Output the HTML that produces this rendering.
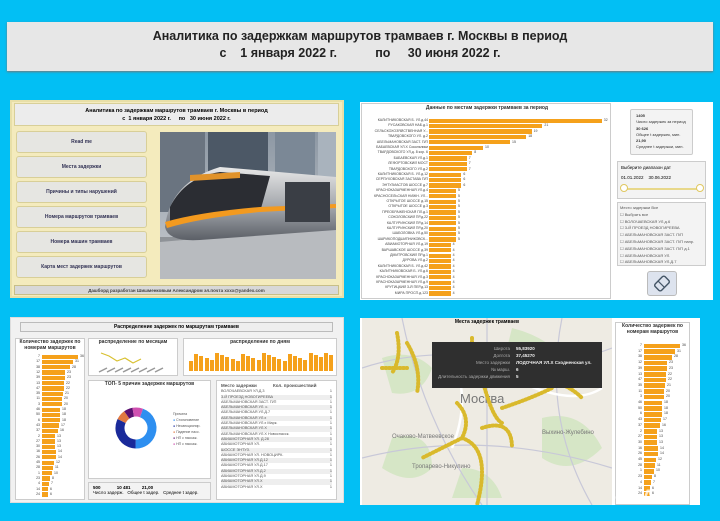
<!DOCTYPE html>
<html><head><meta charset="utf-8"><style>
*{margin:0;padding:0;box-sizing:border-box}
body{width:720px;height:521px;background:#02bff4;position:relative;overflow:hidden;font-family:"Liberation Sans","Noto Sans CJK SC",sans-serif}
.a{position:absolute}
.hdr{left:7px;top:22px;width:706px;height:49px;background:#e7e7e7;box-shadow:0 1px 2px #777;text-align:center;font-weight:bold;font-size:12.5px;color:#222;line-height:17px;padding-top:6px}
.p1{left:10px;top:100px;width:334px;height:198px;background:#f4ebbd;border:2px solid #e8dfa8}
.btn{position:absolute;left:4px;width:131px;height:22px;background:#e6e6e2;border:1px solid #d8cf98;border-radius:3px;font-size:5px;font-weight:bold;color:#335;text-align:center;line-height:21px}
.w{background:#fff}
.box{position:absolute;background:#fff;border:1px solid #ccc;overflow:hidden}
.t{font-size:5px;color:#333}
</style></head><body>
<div class="a hdr">Аналитика по задержкам маршрутов трамваев г. Москвы в период<br><span>с &nbsp;&nbsp;&nbsp;1 января 2022 г. &nbsp;&nbsp;&nbsp;&nbsp;&nbsp;&nbsp;&nbsp;&nbsp;&nbsp;&nbsp;по &nbsp;&nbsp;&nbsp;&nbsp;30 июня 2022 г.</span></div>

<div class="a p1">
 <div class="a" style="left:2px;top:1px;width:325px;height:23px;background:#ececec;border:1px solid #d8cf98;text-align:center;font-size:5.5px;font-weight:bold;line-height:8px;padding-top:3px">Аналитика по задержкам маршрутов трамваев г. Москвы в период<br>с &nbsp;1 января 2022 г. &nbsp;&nbsp;&nbsp;&nbsp;по &nbsp;&nbsp;30 июня 2022 г.</div>
 <div class="btn" style="top:29px">Read me</div>
 <div class="btn" style="top:54px">Места задержки</div>
 <div class="btn" style="top:79px">Причины и типы нарушений</div>
 <div class="btn" style="top:104px">Номера маршрутов трамваев</div>
 <div class="btn" style="top:129px">Номера машин трамваев</div>
 <div class="btn" style="top:154px">Карта мест задержек маршрутов</div>
 <svg class="a" style="left:148px;top:30px" width="176" height="147" viewBox="0 0 176 147">
  <defs><linearGradient id="sk" x1="0" y1="0" x2="0" y2="1"><stop offset="0" stop-color="#8d98a4"/><stop offset="1" stop-color="#c9ccd0"/></linearGradient>
  <linearGradient id="tr" x1="0" y1="0" x2="0" y2="1"><stop offset="0" stop-color="#e8e8e8"/><stop offset=".6" stop-color="#9a9ea4"/><stop offset="1" stop-color="#5b5f66"/></linearGradient></defs>
  <rect width="176" height="147" fill="url(#sk)"/>
  <rect x="0" y="0" width="45" height="80" fill="#6a7480"/><rect x="48" y="0" width="60" height="50" fill="#4c5866"/><rect x="115" y="0" width="40" height="60" fill="#7b8896"/><rect x="158" y="0" width="18" height="70" fill="#a9b3bd"/>
  <rect y="105" width="176" height="42" fill="#8f9398"/>
  <path d="M0 110 L176 95 L176 147 L0 147Z" fill="#b8bbbf"/>
  <path d="M5 95 Q10 50 60 35 L176 45 L176 98 L40 108 Q8 110 5 95Z" fill="url(#tr)"/>
  <path d="M10 75 Q25 45 60 40 L110 44 L100 80 Q60 78 10 90Z" fill="#2b2d33"/>
  <path d="M5 90 Q40 80 100 75 L176 72 L176 76 L100 80 Q40 86 7 96Z" fill="#f39a1f"/>
  <path d="M30 43 L80 40 L80 46 L30 49Z" fill="#e0922a"/>
  <rect x="125" y="50" width="45" height="40" fill="#3a3e45"/>
 </svg>
 <div class="a" style="left:2px;top:183px;width:325px;height:10px;background:#d8d8d8;border:1px solid #c8bf88;font-size:4.5px;text-align:center;line-height:9px;font-weight:bold;color:#444">Дашборд разработан Шишменковым Александром эл.почта xxxx@yandex.com</div>
</div>

<div class="a w" style="left:360px;top:102px;width:353px;height:198px"></div>
<div class="a" style="left:361px;top:103px;width:250px;height:196px;border:1px solid #ccc;background:#fff">
 <div class="a t" style="left:0;width:250px;top:1px;text-align:center;font-weight:bold">Данные по местам задержки трамваев за период</div>
 <div id="b1"></div>
</div>
<div class="box" style="left:630px;top:109px;width:63px;height:46px;background:#f3f3f3;border-radius:2px;font-size:4px;color:#333;padding:3px 5px;line-height:6.3px;white-space:nowrap"><b>1405</b><br>Число задержек за период<br><b>30 626</b><br>Общее t задержек, мин.<br><b>21,90</b><br>Среднее t задержки, мин.</div>
<div class="box" style="left:617px;top:161px;width:89px;height:38px;background:#f3f3f3;font-size:4.5px;padding:3px">Выберите диапазон дат<br><br>01.01.2022 &nbsp;&nbsp; 30.06.2022
 <div class="a" style="left:5px;top:26px;width:78px;height:2px;background:#e8d88a"></div>
 <div class="a" style="left:2px;top:22px;width:8px;height:8px;border-radius:50%;border:1px solid #e0c860;background:#fff"></div>
 <div class="a" style="left:78px;top:22px;width:8px;height:8px;border-radius:50%;border:1px solid #e0c860;background:#fff"></div></div>
<div class="box" style="left:617px;top:202px;width:89px;height:64px;background:#f3f3f3;font-size:4px;padding:2px;line-height:6.8px;color:#555;white-space:nowrap">Место задержки Все<br>☐ Выбрать все<br>☐ ВОЛОЧАЕВСКАЯ УЛ.д.6<br>☐ 3-Й ПРОЕЗД НОВОГИРЕЕВА<br>☐ АБЕЛЬМАНОВСКАЯ ЗАСТ. П/П<br>☐ АБЕЛЬМАНОВСКАЯ ЗАСТ. П/П напр.<br>☐ АБЕЛЬМАНОВСКАЯ ЗАСТ. П/П д.1<br>☐ АБЕЛЬМАНОВСКАЯ УЛ.<br>☐ АБЕЛЬМАНОВСКАЯ УЛ.Д.7</div>
<div class="a" style="left:647px;top:271px;width:30px;height:25px;background:#dde3ee;border:1px solid #bbb;border-radius:3px"><svg width="28" height="23"><g transform="rotate(-45 14 11.5)"><rect x="7" y="7" width="14" height="9" rx="2" fill="none" stroke="#456" stroke-width="1.4"/><path d="M13 7 V16" stroke="#456" stroke-width="1.2"/></g></svg></div>

<div class="a" style="left:10px;top:317px;width:334px;height:186px;background:#f1f1f1;border:1px solid #ddd"></div>
<div class="a" style="left:20px;top:322px;width:313px;height:10px;background:#eee;border:1px solid #bbb;font-size:5px;font-weight:bold;text-align:center;line-height:9px">Распределение задержек по маршрутам трамваев</div>
<div class="box" style="left:15px;top:338px;width:70px;height:162px"><div class="t" style="text-align:center;font-weight:bold;font-size:5px;line-height:6px">Количество задержек по номерам маршрутов</div><div id="b3"></div></div>
<div class="box" style="left:88px;top:338px;width:90px;height:38px"><div class="t" style="text-align:center;font-weight:bold">распределение по месяцам</div>
 <svg class="a" style="left:8px;top:8px" width="80" height="28"><polyline points="4,6 12,9 20,14 28,11 36,16 44,12" fill="none" stroke="#d8c030" stroke-width="1.2"/><g stroke="#999" stroke-width="1.5"><path d="M2 25l8-4M10 25l8-4M18 25l8-4M26 25l8-4M34 25l8-4M42 25l8-4M50 25l8-4M58 25l8-4"/></g></svg></div>
<div class="box" style="left:183px;top:338px;width:154px;height:38px"><div class="t" style="text-align:center;font-weight:bold">распределение по дням</div><div id="b4"></div></div>
<div class="box" style="left:88px;top:380px;width:123px;height:99px"><div class="t" style="text-align:center;font-weight:bold">ТОП- 5 причин задержек маршрутов</div>
 <svg class="a" style="left:22px;top:22px" width="50" height="50" viewBox="-25 -25 50 50"><g fill="none" stroke-width="9">
 <circle r="16" stroke="#2e8ff0" stroke-dasharray="45 100.5" transform="rotate(-70)"/>
 <circle r="16" stroke="#1a2a9a" stroke-dasharray="32 100.5" stroke-dashoffset="-45" transform="rotate(-70)"/>
 <circle r="16" stroke="#e07840" stroke-dasharray="8 100.5" stroke-dashoffset="-77" transform="rotate(-70)"/>
 <circle r="16" stroke="#5a1070" stroke-dasharray="7 100.5" stroke-dashoffset="-85" transform="rotate(-70)"/>
 <circle r="16" stroke="#d050b0" stroke-dasharray="8.5 100.5" stroke-dashoffset="-92" transform="rotate(-70)"/></g></svg>
 <div class="a" style="left:84px;top:30px;font-size:3.5px;line-height:6px;color:#555">Причина<br><span style="color:#2e8ff0">●</span> Столкновение<br><span style="color:#1a2a9a">●</span> Несанкционир.<br><span style="color:#e07840">●</span> Падение пасс.<br><span style="color:#5a1070">●</span> НП с пассаж.<br><span style="color:#d050b0">●</span> НП с пассаж.</div></div>
<div class="box" style="left:88px;top:482px;width:123px;height:18px;background:#f3f3f3;font-size:4.5px;padding:2px 4px;white-space:nowrap"><b>500</b> &nbsp;&nbsp;&nbsp;&nbsp;&nbsp;&nbsp;&nbsp;&nbsp;&nbsp;&nbsp;&nbsp;&nbsp;<b>10 481</b> &nbsp;&nbsp;&nbsp;&nbsp;&nbsp;&nbsp;&nbsp;&nbsp;<b>21,00</b><br>Число задерж. &nbsp;&nbsp;Общее t задер. &nbsp;&nbsp;Среднее t задер.</div>
<div class="box" style="left:216px;top:380px;width:121px;height:120px;font-size:3.8px;color:#555;line-height:5.3px;padding:2px 4px"><b style="font-size:4.5px">Место задержки &nbsp;&nbsp;&nbsp;&nbsp;&nbsp;&nbsp;&nbsp;&nbsp;&nbsp;&nbsp;&nbsp;&nbsp;Кол. происшествий</b><div id="tb"></div></div>

<div class="a" style="left:360px;top:318px;width:340px;height:187px;background:#fff"></div>
<svg class="a" style="left:362px;top:318px" width="250" height="187">
 <rect width="250" height="187" fill="#eeebe3"/>
 <path d="M20 40 q30-10 50 10 q-10 30-40 25z M150 10 q40 10 60 40 q-30 20-70 0z M180 100 q40-10 60 30 q-30 30-60 10z M30 120 q40-10 40 30 q-20 20-50 0z M100 150 q30 0 40 30 h-50z" fill="#d6e6c6"/>
 <path d="M0 50 Q60 30 130 40 T250 30 M40 0 Q60 100 120 187 M200 0 Q180 100 230 187 M0 140 Q120 110 250 150 M125 0 V187" stroke="#c8c8d8" stroke-width="1.2" fill="none"/>
 <path d="M90 40 Q110 80 90 130 M150 60 Q210 90 240 70" stroke="#fff" stroke-width="2.5" fill="none"/>
 <text x="98" y="85" font-size="13" fill="#777" font-family="Liberation Sans">Москва</text>
 <text x="30" y="120" font-size="6" fill="#777" font-family="Liberation Sans">Очаково-Матвеевское</text>
 <text x="50" y="150" font-size="6" fill="#777" font-family="Liberation Sans">Тропарево-Никулино</text>
 <text x="180" y="116" font-size="6" fill="#777" font-family="Liberation Sans">Выхино-Жулебино</text>
 <g fill="none" stroke="#d9b92c" stroke-width="4" stroke-linecap="round" stroke-dasharray="1 2.5">
 <path d="M35 15 Q40 40 30 55 M45 25 Q60 50 55 75 M20 50 H45 M110 20 V40"/>
 <path d="M95 85 Q110 100 100 120 Q80 130 60 140 M100 120 Q130 130 115 187 M120 110 Q150 100 150 130"/>
 <path d="M105 60 Q140 70 165 60 Q200 60 220 80 M140 90 Q170 80 190 70 M120 60 Q130 100 140 105"/>
 </g>
</svg>
<div class="a" style="left:362px;top:319px;width:250px;font-size:5px;font-weight:bold;text-align:center">Места задержек трамваев</div>
<div class="a" style="left:432px;top:342px;width:170px;height:46px;background:#2f2f2f;color:#eee;font-size:4.5px;line-height:7px;padding:3px 0">
 <div style="display:flex"><div style="width:84px;text-align:right;color:#aaa;padding-right:6px">Широта<br>Долгота<br>Место задержки<br>№ марш.<br>Длительность задержки движения</div><div style="font-weight:bold">55,83920<br>37,45270<br>ЛОДОЧНАЯ УЛ.Х Сходненская ул.<br>6<br>5</div></div></div>
<div class="box" style="left:615px;top:322px;width:75px;height:183px"><div class="t" style="text-align:center;font-weight:bold;font-size:5px;line-height:6px">Количество задержек по номерам маршрутов</div><div id="b5"></div></div>
<div class="a" style="left:614px;top:487px;font-size:19px;font-weight:bold;color:rgba(255,255,255,.75);white-space:nowrap">●● Avito</div>

<script>
function bars(id,left,top,rowH,lblW,scale,vals,labels,fs){
 let h='';vals.forEach((v,i)=>{
 h+=`<div style="position:absolute;top:${top+i*rowH}px;left:0;width:${lblW}px;text-align:right;font-size:${fs}px;line-height:${rowH}px;color:#444;white-space:nowrap;overflow:hidden">${labels[i]}</div><div style="position:absolute;top:${top+i*rowH+0.5}px;left:${left}px;width:${v*scale}px;height:${rowH-1}px;background:#f5a11b"></div><div style="position:absolute;top:${top+i*rowH}px;left:${left+v*scale+2}px;font-size:${fs}px;line-height:${rowH}px;color:#444">${v}</div>`});
 document.getElementById(id).innerHTML=h;}
const v1=[32,21,19,18,15,10,8,7,7,7,6,6,6,5,5,5,5,5,5,5,5,5,5,4,4,4,4,4,4,4,4,4,4];
const l1=['КАЛИТНИКОВСКАЯ Б. УЛ.д.44','РУСАКОВСКАЯ НАБ.д.1','СЕЛЬСКОХОЗЯЙСТВЕННАЯ У...','ТВАРДОВСКОГО УЛ. д.2','АБЕЛЬМАНОВСКАЯ ЗАСТ. П/П','БАБАЕВСКАЯ УЛ.Х Сокольники','ТВАРДОВСКОГО УЛ.д. 8 кор. 6','БАБАЕВСКАЯ УЛ.д.1','ЛЕФОРТОВСКИЙ МОСТ','ТВАРДОВСКОГО УЛ.д.2','КАЛИТНИКОВСКАЯ Б. УЛ.д.12','СЕРПУХОВСКАЯ ЗАСТАВА П/П','ЭНТУЗИАСТОВ ШОССЕ д.7','КРАСНОКАЗАРМЕННАЯ УЛ.д.4','КРАСНОСЕЛЬСКАЯ НИЖН. УЛ...','ОТКРЫТОЕ ШОССЕ д.15','ОТКРЫТОЕ ШОССЕ д.3','ПРЕОБРАЖЕНСКАЯ ПЛ.д.1','СОКОЛОВСКИЙ ПР.д.22','КАЛТУРИНСКИЙ ПР.д.14','КАЛТУРИНСКИЙ ПР.д.20','ШАБОЛОВКА УЛ.д.50','ШАРИКОПОДШИПНИКОВСК...','АВИАМОТОРНАЯ УЛ.д.19','ВАРШАВСКОЕ ШОССЕ д.39','ДМИТРОВСКИЙ ПР.д.1','ДУРОВА УЛ.д.2','КАЛИТНИКОВСКАЯ Б. УЛ.д.42','КАЛИТНИКОВСКАЯ Б. УЛ.д.6','КРАСНОКАЗАРМЕННАЯ УЛ.д.3','КРАСНОКАЗАРМЕННАЯ УЛ.д.9','КРУТИЦКИЙ 3-Й ПЕР.д.13','МИРА ПРОСП.д.123'];
bars('b1',67,14,5.4,66,5.4,v1,l1,3.5);
const v3=[36,31,28,23,23,22,22,21,20,20,18,18,18,17,16,13,13,13,14,14,12,11,10,8,7,6,6];
const l3=[7,17,38,12,39,13,47,35,11,3,46,50,6,43,37,2,27,30,16,26,45,28,1,23,4,14,24];
bars('b3',26,15,5.3,24,1.0,v3,l3,3.5);
bars('b5',28,20,5.7,26,1.0,v3,l3,3.5);
let d='';for(let i=0;i<28;i++){const hh=10+((i*7)%9)+(i>25?6:0);d+=`<div style="position:absolute;left:${5+i*5.2}px;top:${32-hh}px;width:4px;height:${hh}px;background:#f5a11b"></div>`}
document.getElementById('b4').innerHTML=d;
const rows=['ВОЛОЧАЕВСКАЯ УЛ.Д.3','3-Й ПРОЕЗД НОВОГИРЕЕВА','АБЕЛЬМАНОВСКАЯ ЗАСТ. П/П','АБЕЛЬМАНОВСКАЯ УЛ. с.','АБЕЛЬМАНОВСКАЯ УЛ.Д.7','АБЕЛЬМАНОВСКАЯ УЛ.х','АБЕЛЬМАНОВСКАЯ УЛ.х Марк.','АБЕЛЬМАНОВСКАЯ УЛ.Х','АБЕЛЬМАНОВСКАЯ УЛ.Х Новоспасск.','АВИАМОТОРНАЯ УЛ. Д.28','АВИАМОТОРНАЯ УЛ.','ШОССЕ ЭНТУЗ.','АВИАМОТОРНАЯ УЛ. НОВОЦИРК.','АВИАМОТОРНАЯ УЛ.Д.12','АВИАМОТОРНАЯ УЛ.Д.17','АВИАМОТОРНАЯ УЛ.Д.2','АВИАМОТОРНАЯ УЛ.Д.9','АВИАМОТОРНАЯ УЛ.Х','АВИАМОТОРНАЯ УЛ.Х'];
document.getElementById('tb').innerHTML=rows.map((r,i)=>`<div style="display:flex;justify-content:space-between;background:${i%2?'#eee':'#fff'}"><span>${r}</span><span>1</span></div>`).join('');
</script>
</body></html>
